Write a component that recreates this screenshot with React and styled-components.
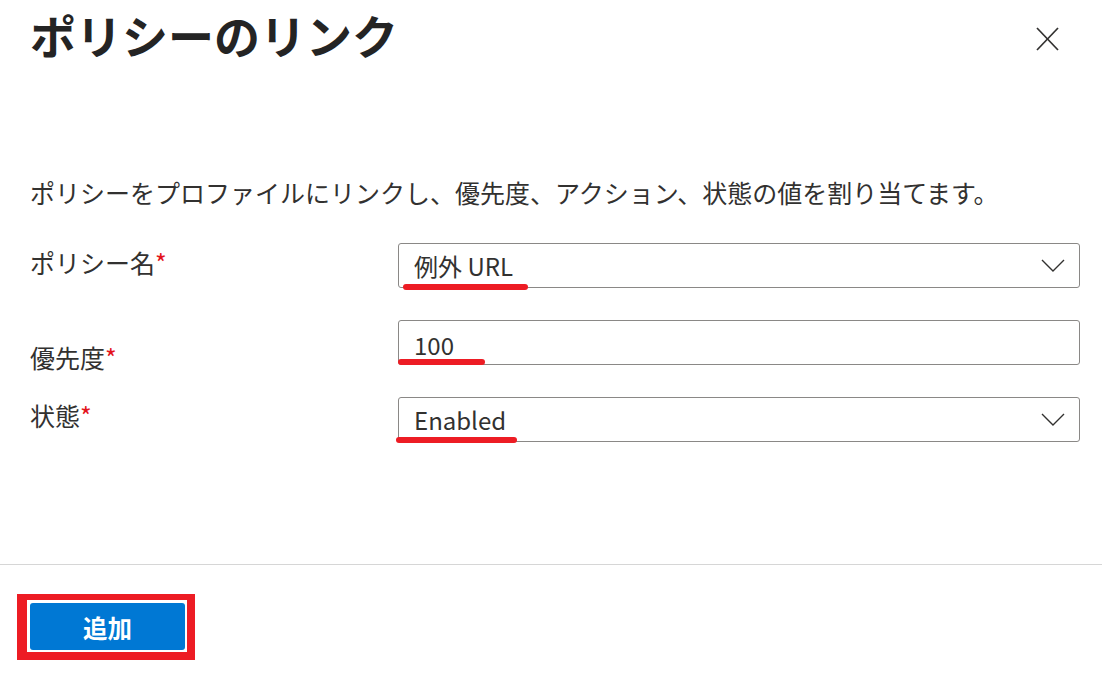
import React from 'react'
import styled, { createGlobalStyle } from 'styled-components'

const GlobalStyle = createGlobalStyle`
  html, body {
    margin: 0;
    padding: 0;
    background: #ffffff;
  }
  body {
    font-family: "Noto Sans CJK JP", "Noto Sans", sans-serif;
    color: #323130;
  }
`

const Panel = styled.div`
  width: 1102px;
  height: 694px;
  display: flex;
  flex-direction: column;
  background: #ffffff;
  overflow: hidden;
`

const Header = styled.div`
  display: flex;
  justify-content: space-between;
  align-items: flex-start;
  padding: 4px 43px 0 30px;
`

const Title = styled.h1`
  margin: 0;
  font-size: 46px;
  line-height: 60px;
  font-weight: 700;
  color: #242424;
`

const CloseButton = styled.button`
  margin-top: 23px;
  width: 23px;
  height: 24px;
  padding: 0;
  border: 0;
  background: transparent;
  color: #323130;
  cursor: pointer;
  display: flex;

  svg {
    width: 23px;
    height: 24px;
  }
`

const Description = styled.p`
  margin: 111px 0 0 30px;
  font-size: 25px;
  line-height: 34px;
  color: #323130;
`

const Form = styled.div`
  display: flex;
  flex-direction: column;
  gap: 32px;
  margin: 34px 22px 0 30px;
`

const Row = styled.div`
  display: flex;
  height: 45px;
`

const Label = styled.div`
  width: 368px;
  flex-shrink: 0;
  padding-top: ${props => props.offset || 0}px;
  font-size: 25px;
  line-height: 34px;
  color: #323130;
  white-space: nowrap;

  span {
    color: #e3131c;
  }
`

const Field = styled.div`
  position: relative;
  flex: 1;
  display: flex;
  align-items: center;
  justify-content: space-between;
  box-sizing: border-box;
  height: 45px;
  padding: 0 14px 0 15px;
  border: 1px solid #8a8886;
  border-radius: 3px;
  font-size: 24px;
  color: #323130;
  cursor: ${props => props.select ? 'pointer' : 'text'};

  .value {
    padding-top: ${props => props.drop || 0}px;
  }

  svg {
    width: 24px;
    height: 13px;
  }
`

const Mark = styled.div`
  position: absolute;
  left: ${props => props.left}px;
  top: ${props => props.top}px;
  width: ${props => props.width}px;
  height: 6px;
  border-radius: 3px;
  background: #ed1c24;
`

const Spacer = styled.div`
  flex: 1;
`

const Footer = styled.div`
  height: 130px;
  box-sizing: border-box;
  border-top: 1px solid #d6d6d6;
  padding: 29px 0 0 17px;
`

const Highlight = styled.div`
  display: inline-flex;
  border-style: solid;
  border-color: #ed1c24;
  border-width: 6px 8px 8px 10px;
  padding: 3px 2px 2px 3px;
`

const PrimaryButton = styled.button`
  width: 155px;
  height: 47px;
  border: 0;
  border-radius: 3px;
  background: #0078d4;
  color: #ffffff;
  font-family: "Noto Sans CJK JP", "Noto Sans", sans-serif;
  font-size: 24.5px;
  font-weight: 700;
  cursor: pointer;
  padding: 2px 0 0;
`

const Chevron = () => (
  <svg viewBox="0 0 24 13" fill="none" stroke="#323130" strokeWidth="1.4">
    <polyline points="1,1 12,12 23,1" />
  </svg>
)

const App = () => {
  return (
    <Panel>
      <GlobalStyle />
      <Header>
        <Title>ポリシーのリンク</Title>
        <CloseButton aria-label="閉じる">
          <svg viewBox="0 0 23 24" fill="none" stroke="#323130" strokeWidth="1.7">
            <line x1="1" y1="1" x2="22" y2="23" />
            <line x1="22" y1="1" x2="1" y2="23" />
          </svg>
        </CloseButton>
      </Header>

      <Description>
        ポリシーをプロファイルにリンクし、優先度、アクション、状態の値を割り当てます。
      </Description>

      <Form>
        <Row>
          <Label offset={2}>ポリシー名<span>*</span></Label>
          <Field select>
            <span className="value">例外 URL</span>
            <Chevron />
            <Mark left={4} top={40} width={125} />
          </Field>
        </Row>
        <Row>
          <Label offset={20}>優先度<span>*</span></Label>
          <Field drop={4}>
            <span className="value">100</span>
            <Mark left={-1} top={38} width={87} />
          </Field>
        </Row>
        <Row>
          <Label offset={1}>状態<span>*</span></Label>
          <Field select>
            <span className="value">Enabled</span>
            <Chevron />
            <Mark left={-3} top={39} width={121} />
          </Field>
        </Row>
      </Form>

      <Spacer />

      <Footer>
        <Highlight>
          <PrimaryButton>追加</PrimaryButton>
        </Highlight>
      </Footer>
    </Panel>
  )
}

export default App
